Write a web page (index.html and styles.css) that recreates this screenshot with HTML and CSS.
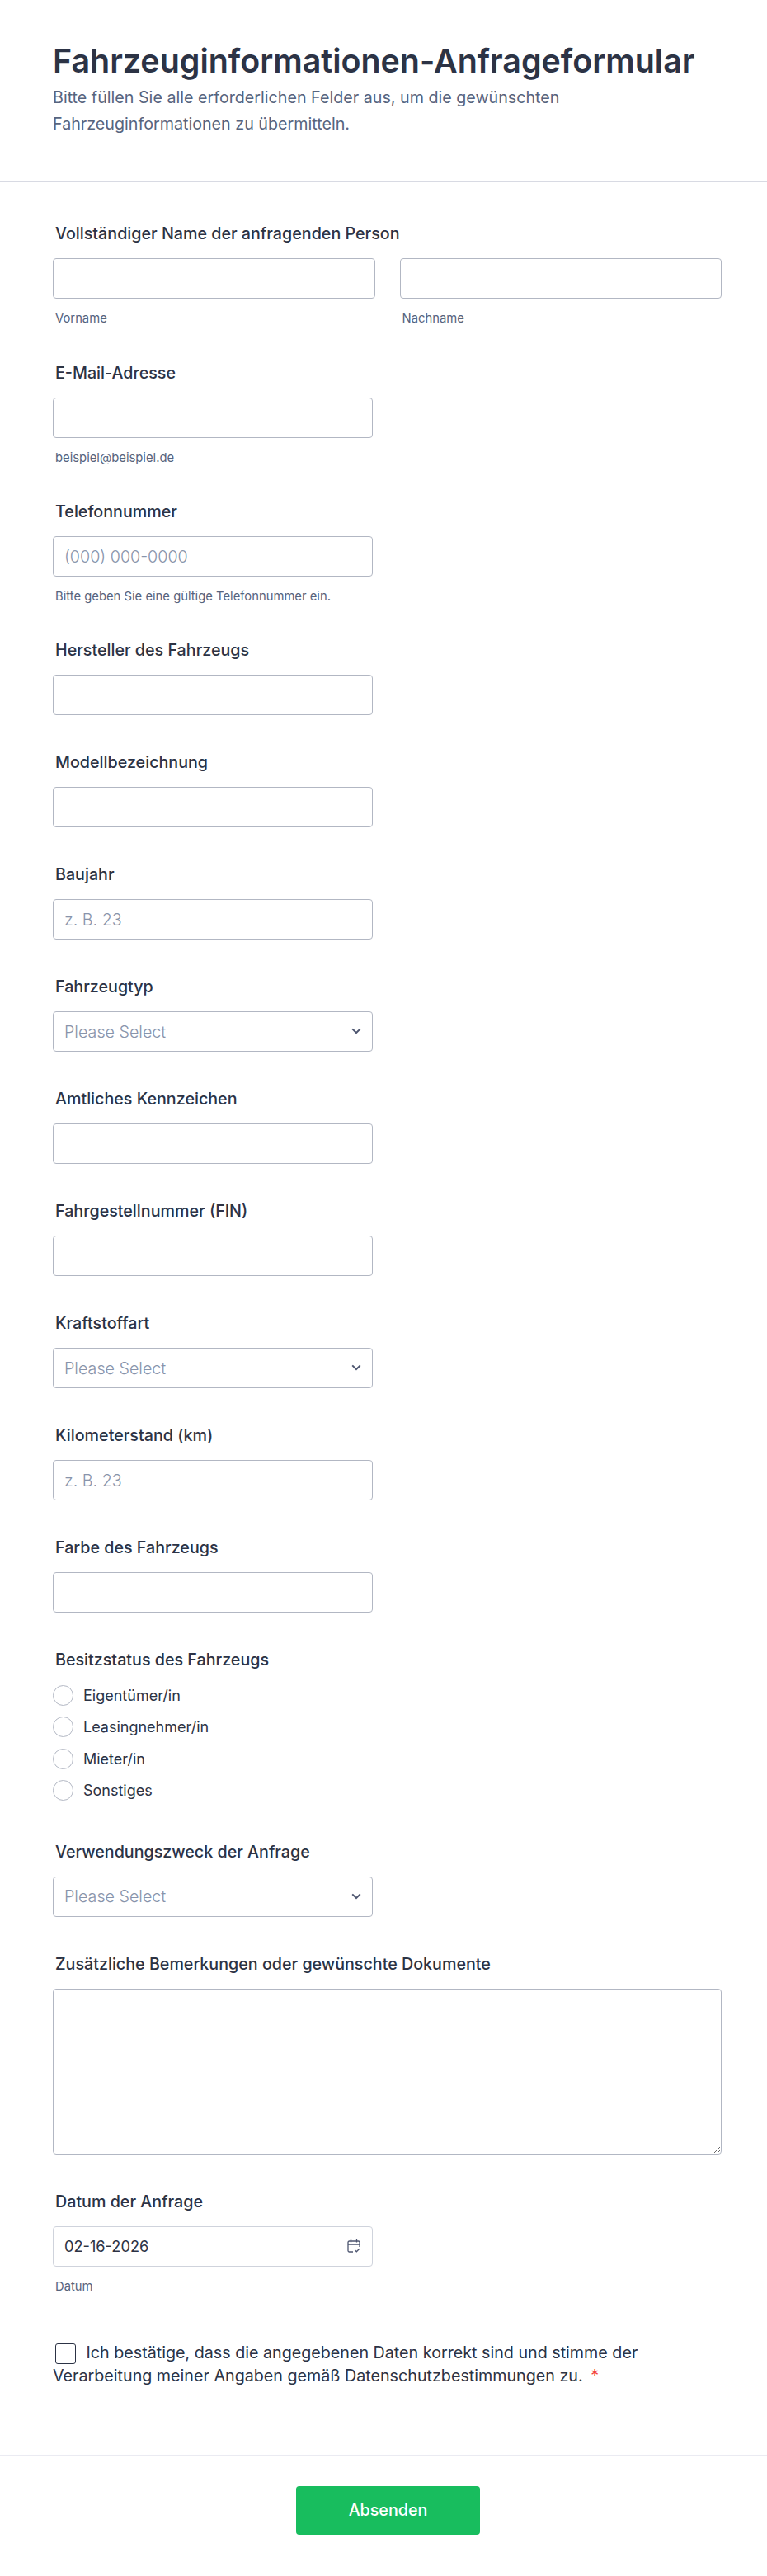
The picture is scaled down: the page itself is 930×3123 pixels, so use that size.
FILE: index.html
```html
<!DOCTYPE html>
<html lang="de">
<head>
    <meta charset="UTF-8">
    <meta name="viewport" content="width=device-width, initial-scale=1.0">
    <title>Fahrzeuginformationen-Anfrageformular</title>
    <link rel="stylesheet" href="styles.css">
</head>
<body>
    <header class="form-header">
        <h1>Fahrzeuginformationen-Anfrageformular</h1>
        <p>Bitte füllen Sie alle erforderlichen Felder aus, um die gewünschten Fahrzeuginformationen zu übermitteln.</p>
    </header>

    <form class="form-body">
        <div class="field field-name">
            <label class="label">Vollständiger Name der anfragenden Person</label>
            <div class="name-row">
                <div class="name-col">
                    <input class="input input-full" type="text">
                    <span class="sublabel">Vorname</span>
                </div>
                <div class="name-col">
                    <input class="input input-full" type="text">
                    <span class="sublabel">Nachname</span>
                </div>
            </div>
        </div>

        <div class="field">
            <label class="label">E-Mail-Adresse</label>
            <input class="input" type="text">
            <span class="sublabel">beispiel@beispiel.de</span>
        </div>

        <div class="field">
            <label class="label">Telefonnummer</label>
            <input class="input" type="text" placeholder="(000) 000-0000">
            <span class="sublabel">Bitte geben Sie eine gültige Telefonnummer ein.</span>
        </div>

        <div class="field">
            <label class="label">Hersteller des Fahrzeugs</label>
            <input class="input" type="text">
        </div>

        <div class="field">
            <label class="label">Modellbezeichnung</label>
            <input class="input" type="text">
        </div>

        <div class="field">
            <label class="label">Baujahr</label>
            <input class="input" type="text" placeholder="z. B. 23">
        </div>

        <div class="field">
            <label class="label">Fahrzeugtyp</label>
            <div class="select-wrap">
                <select class="input select"><option>Please Select</option></select>
                <svg class="chevron" width="12" height="8" viewBox="0 0 12 8"><path d="M1.2 1.4 6 6l4.8-4.6" fill="none" stroke="#4e5670" stroke-width="2"/></svg>
            </div>
        </div>

        <div class="field">
            <label class="label">Amtliches Kennzeichen</label>
            <input class="input" type="text">
        </div>

        <div class="field">
            <label class="label">Fahrgestellnummer (FIN)</label>
            <input class="input" type="text">
        </div>

        <div class="field">
            <label class="label">Kraftstoffart</label>
            <div class="select-wrap">
                <select class="input select"><option>Please Select</option></select>
                <svg class="chevron" width="12" height="8" viewBox="0 0 12 8"><path d="M1.2 1.4 6 6l4.8-4.6" fill="none" stroke="#4e5670" stroke-width="2"/></svg>
            </div>
        </div>

        <div class="field">
            <label class="label">Kilometerstand (km)</label>
            <input class="input" type="text" placeholder="z. B. 23">
        </div>

        <div class="field">
            <label class="label">Farbe des Fahrzeugs</label>
            <input class="input" type="text">
        </div>

        <div class="field field-radio">
            <label class="label label-radio">Besitzstatus des Fahrzeugs</label>
            <div class="radio-list">
                <label class="radio-row"><input class="radio" type="radio" name="status">Eigentümer/in</label>
                <label class="radio-row"><input class="radio" type="radio" name="status">Leasingnehmer/in</label>
                <label class="radio-row"><input class="radio" type="radio" name="status">Mieter/in</label>
                <label class="radio-row"><input class="radio" type="radio" name="status">Sonstiges</label>
            </div>
        </div>

        <div class="field">
            <label class="label">Verwendungszweck der Anfrage</label>
            <div class="select-wrap">
                <select class="input select"><option>Please Select</option></select>
                <svg class="chevron" width="12" height="8" viewBox="0 0 12 8"><path d="M1.2 1.4 6 6l4.8-4.6" fill="none" stroke="#4e5670" stroke-width="2"/></svg>
            </div>
        </div>

        <div class="field">
            <label class="label">Zusätzliche Bemerkungen oder gewünschte Dokumente</label>
            <textarea class="textarea"></textarea>
        </div>

        <div class="field">
            <label class="label">Datum der Anfrage</label>
            <div class="select-wrap">
                <input class="input input-date" type="text" value="02-16-2026">
                <svg class="calendar" width="18" height="18" viewBox="0 0 18 18" fill="none" stroke="#4e5670" stroke-width="1.3">
                    <path d="M8 16H3.500A1.500 1.500 0 0 1 2 14.500V4.500A1.500 1.500 0 0 1 3.500 3h11A1.500 1.500 0 0 1 16 4.500V10"/>
                    <path d="M2 7h14M5.500 1v3.500M12.500 1v3.500"/>
                    <path d="m10.500 14 1.800 1.800 3.500-3.600"/>
                </svg>
            </div>
            <span class="sublabel">Datum</span>
        </div>

        <div class="consent">
            <input class="checkbox" type="checkbox">
            Ich bestätige, dass die angegebenen Daten korrekt sind und stimme der Verarbeitung meiner Angaben gemäß Datenschutzbestimmungen zu. <span class="required">*</span>
        </div>

        <div class="form-footer">
            <button class="btn" type="button">Absenden</button>
        </div>
    </form>
</body>
</html>
```

FILE: styles.css
```css
* {
    box-sizing: border-box;
}

body {
    font-family: Inter, sans-serif;
    font-optical-sizing: none;
    background-color: #fff;
    color: #2c3345;
    margin: 0;
    padding: 0;
}

.form-header {
    height: 221px;
    padding: 46px 64px 0;
    border-bottom: 1px solid #d8dae3;
}

.form-header h1 {
    margin: 0;
    font-size: 39.4px;
    line-height: 56px;
    font-weight: 600;
    color: #2c3345;
}

.form-header p {
    margin: 0;
    font-size: 19.7px;
    line-height: 32px;
    color: #57647e;
}

.form-body {
    padding-top: 50px;
}

.field {
    padding: 0 55px 45px 64px;
}

.field-name {
    padding-bottom: 46px;
}

.field-radio {
    padding-bottom: 50px;
}

.label {
    display: block;
    margin: 0 0 18px 3px;
    font-size: 19.7px;
    line-height: 24px;
    font-weight: 500;
}

.label-radio {
    margin-bottom: 19px;
}

.name-row {
    display: flex;
    gap: 30px;
}

.name-col {
    flex: 1;
}

.input {
    display: block;
    width: 388px;
    height: 49px;
    padding: 0 13px;
    font-family: Inter, sans-serif;
    font-optical-sizing: none;
    font-size: 18.2px;
    color: #2c3345;
    background: #fff;
    border: 1px solid #b2b7c3;
    border-radius: 4px;
}

.input-full {
    width: 100%;
}

.input-date {
    border-color: #cfd3dc;
}

.input::placeholder {
    color: #8894ab;
    font-size: 19.7px;
    font-weight: 300;
}

.sublabel {
    display: block;
    margin: 16px 0 0 3px;
    font-size: 14.8px;
    line-height: 16px;
    color: #57647e;
}

.select-wrap {
    position: relative;
    width: 388px;
}

.select {
    appearance: none;
    color: #8894ab;
    font-size: 19.7px;
    font-weight: 300;
}

.chevron {
    position: absolute;
    top: 20px;
    right: 14px;
}

.calendar {
    position: absolute;
    top: 15px;
    right: 14px;
}

.radio-list {
    display: flex;
    flex-direction: column;
    gap: 13.3px;
}

.radio-row {
    display: flex;
    align-items: center;
    gap: 12px;
    height: 25px;
    font-size: 18px;
}

.radio {
    appearance: none;
    width: 25px;
    height: 25px;
    margin: 0;
    background: #fff;
    border: 1px solid #b2b7c3;
    border-radius: 50%;
}

.textarea {
    display: block;
    width: 100%;
    height: 201px;
    border: 1px solid #b2b7c3;
    border-radius: 4px;
}

.consent {
    padding: 0 64px;
    margin-top: 13px;
    font-size: 19.7px;
    line-height: 28px;
}

.checkbox {
    appearance: none;
    width: 25px;
    height: 25px;
    margin: 0 7px 0 3px;
    vertical-align: -7px;
    background: #fff;
    border: 1.5px solid #2c3345;
    border-radius: 3px;
}

.required {
    color: #f23a3c;
    margin-left: 4px;
}

.form-footer {
    display: flex;
    justify-content: center;
    margin-top: 82px;
    padding: 36px 0 0 11px;
    border-top: 2px solid #eaebf2;
}

.btn {
    width: 223px;
    height: 59px;
    font-family: Inter, sans-serif;
    font-optical-sizing: none;
    font-size: 19.7px;
    font-weight: 500;
    color: #fff;
    background: #18bd5e;
    border: none;
    border-radius: 4px;
    cursor: pointer;
}
```
